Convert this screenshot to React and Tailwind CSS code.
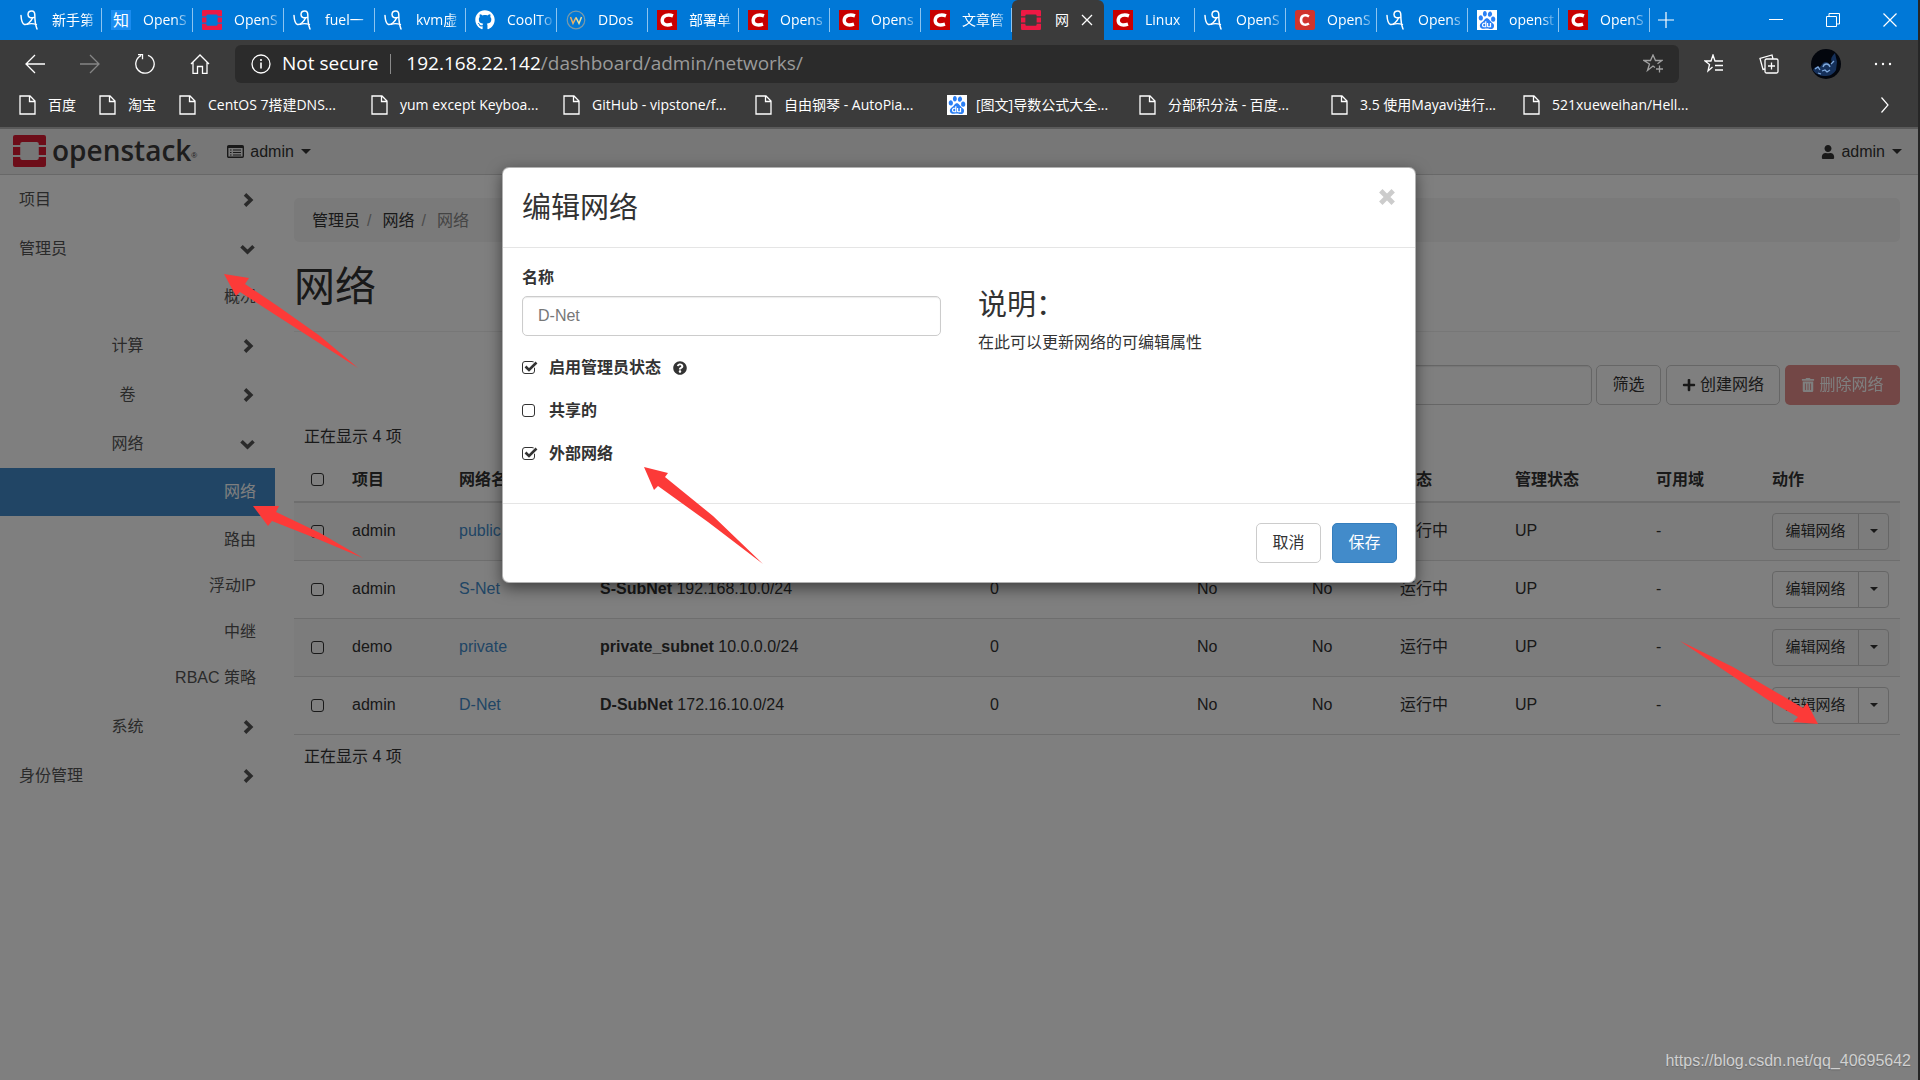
import { FaGithub, FaPlus, FaQuestionCircle, FaTrashAlt, FaUser } from 'react-icons/fa';
import { SiBaidu } from 'react-icons/si';

const tabs = [
    { icon: 'blog', title: '新手第' },
    { icon: 'zhihu', title: 'OpenS' },
    { icon: 'openstack', title: 'OpenS' },
    { icon: 'blog', title: 'fuel一' },
    { icon: 'blog', title: 'kvm虚' },
    { icon: 'github', title: 'CoolTo' },
    { icon: 'w', title: 'DDos' },
    { icon: 'csdn', title: '部署单' },
    { icon: 'csdn', title: 'Opens' },
    { icon: 'csdn', title: 'Opens' },
    { icon: 'csdn', title: '文章管' },
    { icon: 'openstack', title: '网', active: true },
    { icon: 'csdn', title: 'Linux' },
    { icon: 'blog', title: 'OpenS' },
    { icon: 'csdnRound', title: 'OpenS' },
    { icon: 'blog', title: 'Opens' },
    { icon: 'baidu', title: 'openst' },
    { icon: 'csdn', title: 'OpenS' },
];

const bookmarks = [
    { title: '百度', short: true },
    { title: '淘宝', short: true },
    { title: 'CentOS 7搭建DNS...' },
    { title: 'yum except Keyboa...' },
    { title: 'GitHub - vipstone/f...' },
    { title: '自由钢琴 - AutoPia...' },
    { title: '[图文]导数公式大全...', icon: 'baidu' },
    { title: '分部积分法 - 百度...' },
    { title: '3.5 使用Mayavi进行...' },
    { title: '521xueweihan/Hell...' },
];

const networks = [
    { project: 'admin', name: 'public', subnet: '', cidr: '', agents: '', shared: '', external: '' },
    { project: 'admin', name: 'S-Net', subnet: 'S-SubNet', cidr: '192.168.10.0/24', agents: '0', shared: 'No', external: 'No' },
    { project: 'demo', name: 'private', subnet: 'private_subnet', cidr: '10.0.0.0/24', agents: '0', shared: 'No', external: 'No' },
    { project: 'admin', name: 'D-Net', subnet: 'D-SubNet', cidr: '172.16.10.0/24', agents: '0', shared: 'No', external: 'No' },
];

function OpenstackMark({ className }) {
    return (
        <svg viewBox="0 0 32 32" preserveAspectRatio="none" className={className} fill="currentColor">
            <path d="M2 0h28a2 2 0 0 1 2 2v8h-7V9a2 2 0 0 0-2-2H9a2 2 0 0 0-2 2v1H0V2a2 2 0 0 1 2-2z" />
            <path d="M0 12h7v8H0zM25 12h7v8h-7z" />
            <path d="M0 22h7v1a2 2 0 0 0 2 2h14a2 2 0 0 0 2-2v-1h7v8a2 2 0 0 1-2 2H2a2 2 0 0 1-2-2z" />
        </svg>
    );
}

function Favicon({ icon }) {
    switch (icon) {
        case 'zhihu':
            return <span className="flex size-5 shrink-0 items-center justify-center bg-[#1a8cf0] text-base leading-5 text-white">知</span>;
        case 'openstack':
            return <OpenstackMark className="size-5 shrink-0 text-[#ed1944]" />;
        case 'github':
            return <FaGithub className="size-5 shrink-0 text-white" />;
        case 'w':
            return (
                <svg viewBox="0 0 20 20" className="size-5 shrink-0" fill="none">
                    <circle cx="10" cy="10" r="8.8" stroke="#7a9aa8" strokeWidth="1.2" />
                    <path d="M4.5 7l2.5 6.5 3-6" stroke="#f0b060" strokeWidth="1.5" />
                    <path d="M10 7.5l3 6 2.5-6.5" stroke="#e8e0a0" strokeWidth="1.5" />
                </svg>
            );
        case 'csdn':
            return (
                <svg viewBox="0 0 20 20" className="size-5 shrink-0">
                    <path d="M0 0h20v20H0z" fill="#c80000" />
                    <path d="M16 5.800C11.500 4 5.500 5 5.200 10.200c-.2 5 5 5.500 9.800 4" fill="none" stroke="#fff" strokeWidth="3.400" />
                </svg>
            );
        case 'csdnRound':
            return (
                <svg viewBox="0 0 20 20" className="size-5 shrink-0">
                    <rect width="20" height="20" rx="2.500" fill="#d0342c" />
                    <path d="M14 6.500C10 4 6 5.500 6 10s4 6 8 3.500" fill="none" stroke="#fff" strokeWidth="2.600" />
                </svg>
            );
        case 'baidu':
            return (
                <span className="flex size-5 shrink-0 items-center justify-center bg-white text-[#2a7ff5]">
                    <SiBaidu className="size-[18px]" />
                </span>
            );
        default:
            return (
                <svg viewBox="0 0 20 20" className="size-5 shrink-0" fill="none" stroke="#fff" strokeLinecap="round">
                    <path d="M1 5.500c.3 5 1 8.500 3.500 9 3 .5 6.500-3 8-6.500" strokeWidth="1.500" />
                    <path d="M13.500 7.500c-3 1-5.500-.5-5.500-3s2-3.500 3.800-3.500 3 1.300 3 4c0 5 .2 9 2.200 14" strokeWidth="1.500" />
                    <path d="M7 14.500c3-1.300 6-1.200 9.500 0" strokeWidth="1.300" />
                </svg>
            );
    }
}

function Tab({ tab }) {
    if (tab.active) {
        return (
            <div className="flex h-10 w-[92px] shrink-0 items-center rounded-t-md bg-[#3b3b3b] pl-[9px]">
                <Favicon icon={tab.icon} />
                <span className="ml-[14px] whitespace-nowrap">{tab.title}</span>
                <button aria-label="Close tab" className="ml-3">
                    <svg viewBox="0 0 12 12" className="size-3" stroke="#fff" strokeWidth="1.3"><path d="M1 1l10 10M11 1L1 11" /></svg>
                </button>
            </div>
        );
    }
    return (
        <div className="flex h-10 w-[91px] shrink-0 items-center pl-[9px]">
            <Favicon icon={tab.icon} />
            <span className="ml-3 flex-1 whitespace-nowrap mask-r-from-65% mask-r-to-100%">{tab.title}</span>
            <span className="h-6 w-px bg-[#8cc4f0]" />
        </div>
    );
}

function Browser() {
    return (
        <header className="bg-[#3b3b3b] font-['Open_Sans','Noto_Sans_CJK_SC',sans-serif] text-sm text-white">
            <div className="flex h-10 items-center bg-[#0078d7] pl-[11px]">
                {tabs.map((tab, i) => <Tab key={i} tab={tab} />)}
                <button aria-label="New tab" className="ml-2">
                    <svg viewBox="0 0 16 16" className="size-4" stroke="#fff" strokeWidth="1.200"><path d="M8 0v16M0 8h16" /></svg>
                </button>
                <div className="mr-[21px] ml-auto flex items-center gap-[43px]">
                    <button aria-label="Minimize">
                        <svg viewBox="0 0 14 14" className="size-3.5" stroke="#fff"><path d="M0 6.500h14" /></svg>
                    </button>
                    <button aria-label="Restore">
                        <svg viewBox="0 0 14 14" className="size-3.5" fill="none" stroke="#fff"><path d="M.5 3.500h10v10H.5zM3 3V.5h10.500V11H11" /></svg>
                    </button>
                    <button aria-label="Close">
                        <svg viewBox="0 0 14 14" className="size-3.5" stroke="#fff" strokeWidth="1.200"><path d="M.5.5l13 13M13.500.5l-13 13" /></svg>
                    </button>
                </div>
            </div>

            <div className="flex items-center pt-[5px]">
                <div className="flex w-[235px] shrink-0 items-center gap-[35px] pl-[25px]">
                    <button aria-label="Back">
                        <svg viewBox="0 0 20 20" className="size-5" fill="none" stroke="#fff" strokeWidth="1.300"><path d="M20 10H1M10 1L1 10l9 9" /></svg>
                    </button>
                    <button aria-label="Forward">
                        <svg viewBox="0 0 20 20" className="size-5" fill="none" stroke="#858585" strokeWidth="1.300"><path d="M0 10h19M10 1l9 9-9 9" /></svg>
                    </button>
                    <button aria-label="Refresh">
                        <svg viewBox="0 0 20 20" className="size-5" fill="none" stroke="#fff" strokeWidth="1.300"><path d="M13 1.300A9.200 9.200 0 1 1 6 1.700M3 .7h4.500v4.500" /></svg>
                    </button>
                    <button aria-label="Home">
                        <svg viewBox="0 0 20 20" className="size-5" fill="none" stroke="#fff" strokeWidth="1.300"><path d="M1 10l9-9 9 9M3 8.500V19.300h4.500v-6.800h5v6.800H17V8.500" /></svg>
                    </button>
                </div>
                <div className="flex h-[38px] flex-1 items-center rounded-md bg-[#2b2b2b] px-4 text-[19px]">
                    <svg viewBox="0 0 20 20" className="size-5 shrink-0" fill="none" stroke="#fff" strokeWidth="1.300">
                        <circle cx="10" cy="10" r="9" />
                        <path d="M10 8.500v6M10 5v2" strokeWidth="1.600" />
                    </svg>
                    <span className="ml-[11px]">Not secure</span>
                    <span className="mr-[15px] ml-3 h-5 w-px bg-[#8a8a8a]" />
                    <span className="flex-1 text-[#9a9a9a]"><span className="text-white">192.168.22.142</span>/dashboard/admin/networks/</span>
                    <button aria-label="Add to favorites">
                        <svg viewBox="0 0 20 20" className="size-5" fill="none" stroke="#a0a0a0" strokeWidth="1.300">
                            <path d="M12 13.500l-2-1.500-5.500 4.500 2-6.500L1 6.500h6.500L10 1l2.500 5.500H19l-4.500 3.300M16.500 11.500v7M13 15h7" />
                        </svg>
                    </button>
                </div>
                <div className="flex w-[239px] shrink-0 items-center pl-[25px]">
                    <button aria-label="Favorites">
                        <svg viewBox="0 0 20 20" className="size-5" fill="none" stroke="#fff" strokeWidth="1.300">
                            <path d="M8.500 13L4 17l1.500-6.500L1 7h6l2-6 2 6h8M11 11.500h8M11 16h8" />
                        </svg>
                    </button>
                    <button aria-label="Collections" className="ml-[35px]">
                        <svg viewBox="0 0 20 20" className="size-5" fill="none" stroke="#fff" strokeWidth="1.300">
                            <rect x="6" y="5" width="13" height="14" rx="1.500" />
                            <path d="M12.500 8.500v7M9 12h7M6 15l-2 .5L1 4.500 13 1l1 4" />
                        </svg>
                    </button>
                    <button aria-label="Profile" className="ml-8">
                        <svg viewBox="0 0 30 30" className="size-[30px]">
                            <circle cx="15" cy="15" r="15" fill="#03060d" />
                            <path d="M2 21c2-4 4-4 7-3l3-4c3-2 5-1 7 2l2-3c-2-3 0-6 3-9l2 9-1 8c-3 5-7 6-11 6S4 25 2 21z" fill="#15305a" />
                            <path d="M4 20l3-2 2 3M12 18c1-4 6-4 7 0M11 22l3-1 2 2 3-2M20 15l3-3M7 24l3 1" fill="none" stroke="#7fa9dc" strokeWidth="1.300" />
                        </svg>
                    </button>
                    <button aria-label="Settings" className="ml-[33px]">
                        <svg viewBox="0 0 18 4" className="h-1 w-[18px]" fill="#fff"><circle cx="2" cy="2" r="1.200" /><circle cx="9" cy="2" r="1.200" /><circle cx="16" cy="2" r="1.200" /></svg>
                    </button>
                </div>
            </div>

            <nav className="flex h-11 items-center pr-[29px] pl-[19px]">
                {bookmarks.map((mark) => (
                    <a key={mark.title} href="#" className={`flex shrink-0 items-center ${mark.short ? 'w-20' : 'w-48'}`}>
                        {mark.icon ? <Favicon icon={mark.icon} /> : (
                            <svg viewBox="0 0 17 20" className="mr-[3px] h-5 w-[17px]" fill="none" stroke="#fff" strokeWidth="1.300">
                                <path d="M1 1h10l5 5v13H1zM10.500 1v5.500H16" />
                            </svg>
                        )}
                        <span className="ml-[9px] whitespace-nowrap">{mark.title}</span>
                    </a>
                ))}
                <button aria-label="More bookmarks" className="ml-auto">
                    <svg viewBox="0 0 8 16" className="h-4 w-2" fill="none" stroke="#fff" strokeWidth="1.200"><path d="M.5.500L7 8l-6.500 7.500" /></svg>
                </button>
            </nav>
        </header>
    );
}

function Caret() {
    return <svg viewBox="0 0 10 5" className="h-[5px] w-[10px]" fill="currentColor"><path d="M0 0h10L5 5z" /></svg>;
}

function Navbar() {
    return (
        <div className="flex h-[46px] items-center border-b border-[#d0d0d0] bg-[#eeeeee] pr-4 pl-[13px] text-[#333]">
            <a href="#" className="flex items-center pb-1">
                <OpenstackMark className="mt-[3px] h-8 w-[33px] text-[#da1a32]" />
                <span className="ml-[6px] font-['Open_Sans',sans-serif] text-[28px] leading-8 font-semibold text-[#3c3a3a]">openstack</span>
                <span className="mt-3 text-[8px] text-[#3c3a3a]">®</span>
            </a>
            <button className="ml-[30px] flex items-center">
                <svg viewBox="0 0 17 13" className="h-[13px] w-[17px]" fill="none" stroke="currentColor">
                    <rect x=".7" y=".7" width="15.600" height="11.600" rx="1" strokeWidth="1.400" />
                    <path d="M1 2h15" strokeWidth="2" />
                    <path d="M3 5h1.500M6 5h8M3 7.500h1.500M6 7.500h8M3 10h1.500M6 10h8" strokeWidth="1.100" />
                </svg>
                <span className="mr-[7px] ml-[6px]">admin</span>
                <Caret />
            </button>
            <button className="ml-auto flex items-center">
                <FaUser className="size-[14px]" />
                <span className="mr-[7px] ml-[6px]">admin</span>
                <Caret />
            </button>
        </div>
    );
}

function Chevron({ open }) {
    return open ? (
        <svg viewBox="0 0 15 14" className="h-[14px] w-[15px]" fill="none" stroke="currentColor" strokeWidth="3.600"><path d="M1.500 4.200L7.500 10l6-5.800" /></svg>
    ) : (
        <svg viewBox="0 0 15 14" className="h-[14px] w-[15px]" fill="none" stroke="currentColor" strokeWidth="3.600"><path d="M5 1.400L10.800 7 5 12.600" /></svg>
    );
}

function Group({ title, open, sub }) {
    return (
        <a href="#" className="grid h-[49px] grid-cols-[1fr_auto] items-center pr-5 pl-[19px]">
            <span className={sub ? 'pr-1 text-center' : ''}>{title}</span>
            <Chevron open={open} />
        </a>
    );
}

function Item({ title }) {
    return <a href="#" className="flex h-[46px] items-center justify-end pr-[19px]">{title}</a>;
}

function Sidebar() {
    return (
        <nav className="w-[275px] shrink-0 text-[#555]">
            <Group title="项目" />
            <Group title="管理员" open />
            <a href="#" className="flex h-12 items-center justify-end pr-[19px]">概况</a>
            <Group title="计算" sub />
            <Group title="卷" sub />
            <Group title="网络" sub open />
            <a href="#" className="flex h-12 items-center justify-end bg-[#428bca] pr-[19px] text-white">网络</a>
            <div className="py-px">
                <Item title="路由" />
                <Item title="浮动IP" />
                <Item title="中继" />
                <Item title="RBAC 策略" />
            </div>
            <Group title="系统" sub />
            <Group title="身份管理" />
        </nav>
    );
}

function Checkbox({ id, label, defaultChecked }) {
    return (
        <span className="relative block size-[13px]">
            <input
                id={id}
                type="checkbox"
                aria-label={label}
                defaultChecked={defaultChecked}
                className="peer block size-[13px] appearance-none rounded-[3px] border border-[#333]"
            />
            <svg viewBox="0 0 16 13" className="pointer-events-none absolute top-0 left-0 hidden h-[13px] w-4 peer-checked:block" fill="none">
                <path d="M3.500 5.500L7 9l7.500-7.500" stroke="#fff" strokeWidth="4.500" />
                <path d="M3.500 5.500L7 9l7.500-7.500" stroke="#333" strokeWidth="2.600" />
            </svg>
        </span>
    );
}

function NetworkTable() {
    return (
        <table className="w-full table-fixed text-left">
            <colgroup>
                <col className="w-12" />
                <col className="w-[107px]" />
                <col className="w-[141px]" />
                <col />
                <col className="w-[207px]" />
                <col className="w-[115px]" />
                <col className="w-[88px]" />
                <col className="w-[115px]" />
                <col className="w-[141px]" />
                <col className="w-[116px]" />
                <col className="w-[138px]" />
            </colgroup>
            <thead>
                <tr className="h-11 border-b-2 border-[#ddd] [&>th]:px-[10px] [&>th]:font-bold">
                    <th><span className="flex pl-[7px]"><Checkbox label="全选" /></span></th>
                    <th>项目</th>
                    <th>网络名称</th>
                    <th></th>
                    <th></th>
                    <th></th>
                    <th></th>
                    <th>状态</th>
                    <th>管理状态</th>
                    <th>可用域</th>
                    <th>动作</th>
                </tr>
            </thead>
            <tbody>
                {networks.map((net) => (
                    <tr key={net.name} className="h-[58px] border-b border-[#ddd] odd:bg-[#f9f9f9] [&>td]:px-[10px]">
                        <td><span className="flex pl-[7px]"><Checkbox label={net.name} /></span></td>
                        <td>{net.project}</td>
                        <td><a href="#" className="text-[#428bca]">{net.name}</a></td>
                        <td><b>{net.subnet}</b> {net.cidr}</td>
                        <td>{net.agents}</td>
                        <td>{net.shared}</td>
                        <td>{net.external}</td>
                        <td>运行中</td>
                        <td>UP</td>
                        <td>-</td>
                        <td>
                            <div className="flex h-[37px] text-[15px]">
                                <button className="w-[87px] shrink-0 rounded-l border border-[#ccc]">编辑网络</button>
                                <button aria-label="更多" className="-ml-px flex w-[31px] shrink-0 items-center justify-center rounded-r border border-[#ccc]">
                                    <svg viewBox="0 0 8 4" className="h-1 w-2" fill="currentColor"><path d="M0 0h8L4 4z" /></svg>
                                </button>
                            </div>
                        </td>
                    </tr>
                ))}
            </tbody>
        </table>
    );
}

function NetworksPage() {
    return (
        <main className="min-w-0 flex-1 pr-[18px] pl-[19px]">
            <ol className="mt-[23px] flex h-11 items-center rounded-[5px] bg-[#f5f5f5] pt-0.5 pl-[18px]">
                <li><a href="#">管理员</a></li>
                <li className="px-[7px] text-[#999]">/</li>
                <li className="ml-1"><a href="#">网络</a></li>
                <li className="px-[7px] text-[#999]">/</li>
                <li className="ml-1 text-[#888]">网络</li>
            </ol>
            <h1 className="mt-[19px] border-b border-[#eee] pb-[18px] text-[41px] leading-[52px]">网络</h1>
            <div className="mt-[33px] flex h-10 justify-end">
                <input aria-label="筛选" className="w-[300px] rounded-[5px] border border-[#ccc] px-4 shadow-[inset_0_1px_1px_rgba(0,0,0,0.08)]" />
                <button className="ml-1 w-[65px] rounded-[5px] border border-[#ccc]">筛选</button>
                <button className="ml-[5px] flex w-[114px] items-center justify-center gap-1 rounded-[5px] border border-[#ccc]">
                    <FaPlus className="size-[14px]" />创建网络
                </button>
                <button className="ml-[5px] flex w-[115px] items-center justify-center gap-1 rounded-[5px] bg-[#d9534f] text-white opacity-65">
                    <FaTrashAlt className="size-[14px]" />删除网络
                </button>
            </div>
            <div className="flex h-[53px] items-end pb-[9px] pl-[10px] leading-6">正在显示 4 项</div>
            <NetworkTable />
            <div className="flex h-11 items-center pl-[10px]">正在显示 4 项</div>
        </main>
    );
}

function FormCheck({ id, label, help, defaultChecked }) {
    return (
        <div className="flex h-[43px] items-center">
            <Checkbox id={id} label={label} defaultChecked={defaultChecked} />
            <label htmlFor={id} className="ml-[14px] font-bold">{label}</label>
            {help && <FaQuestionCircle className="ml-3 size-[14px]" />}
        </div>
    );
}

function EditModal() {
    return (
        <div role="dialog" aria-labelledby="modal-title" className="w-[914px] rounded-[7px] border border-black/30 bg-white shadow-[0_5px_15px_rgba(0,0,0,0.5)]">
            <div className="flex h-20 items-start justify-between border-b border-[#e5e5e5] pr-5 pl-[19px]">
                <h3 id="modal-title" className="pt-5 text-[29px] leading-10">编辑网络</h3>
                <button aria-label="关闭" className="mt-[21px] text-[#ccc]">
                    <svg viewBox="0 0 16 16" className="size-4" fill="none" stroke="currentColor" strokeWidth="4.800"><path d="M1.800 1.800l12.400 12.400M14.200 1.800L1.800 14.200" /></svg>
                </button>
            </div>
            <div className="grid h-64 grid-cols-2 border-b border-[#e5e5e5] px-[19px] pt-[18px]">
                <div className="pr-[18px]">
                    <label htmlFor="name" className="block leading-6 font-bold">名称</label>
                    <input
                        id="name"
                        defaultValue="D-Net"
                        className="mt-[6px] mb-[10px] h-10 w-full rounded-[5px] border border-[#ccc] px-[15px] text-[#777] shadow-[inset_0_1px_1px_rgba(0,0,0,0.08)]"
                    />
                    <FormCheck id="admin-state" label="启用管理员状态" help defaultChecked />
                    <FormCheck id="shared" label="共享的" />
                    <FormCheck id="external" label="外部网络" defaultChecked />
                </div>
                <div className="pt-[19px] pl-[19px]">
                    <h3 className="text-[29px] leading-10">说明：</h3>
                    <p className="mt-[6px] leading-6">在此可以更新网络的可编辑属性</p>
                </div>
            </div>
            <div className="flex h-[78px] items-center justify-end gap-[11px] pr-[18px]">
                <button className="h-10 w-[65px] rounded-[5px] border border-[#ccc]">取消</button>
                <button className="h-10 w-[65px] rounded-[5px] border border-[#357ebd] bg-[#428bca] text-white">保存</button>
            </div>
        </div>
    );
}

function Arrow({ className, viewBox, d }) {
    return (
        <svg viewBox={viewBox} className={`pointer-events-none absolute ${className}`} fill="#fc3a38">
            <path d={d} />
        </svg>
    );
}

export default function App() {
    return (
        <div className="relative flex min-h-screen flex-col border-r-2 border-[#262626] bg-white">
            <Browser />
            <div className="relative flex-1 border-t-2 border-[#b4b4b4] font-['Liberation_Sans','Noto_Sans_CJK_SC',sans-serif] text-base text-[#333]">
                <Navbar />
                <div className="flex">
                    <Sidebar />
                    <NetworksPage />
                </div>
                <div className="absolute -top-0.5 right-0 bottom-0 left-0 flex items-start justify-center bg-black/50 pt-10">
                    <EditModal />
                </div>
            </div>

            <Arrow className="top-[274px] left-[224px] h-[94px] w-[134px]" viewBox="0 0 134 94" d="M0 0L25 4 21 10 55 33 96 62 134 94 92 67 50 40 16 18 12 22z" />
            <Arrow className="top-[506px] left-[253px] h-[53px] w-[110px]" viewBox="0 0 110 53" d="M0 0H26L23 6 67 27 110 52 67 34 19 15 15 20z" />
            <Arrow className="top-[467px] left-[644px] h-[97px] w-[119px]" viewBox="0 0 119 97" d="M0 0L24 6 21 10 69 49 119 97 64 55 14 19 10 23z" />
            <Arrow className="top-[641px] left-[1680px] h-[84px] w-[139px]" viewBox="0 0 139 84" d="M0 0L53 26 123 67 127 62 138 83 113 81 118 76 88 59 51 34z" />

            <div className="absolute right-[7px] bottom-[7px] font-['Liberation_Sans',sans-serif] text-base leading-6 text-[#d0d0d0] text-shadow-xs">
                https://blog.csdn.net/qq_40695642
            </div>
        </div>
    );
}
